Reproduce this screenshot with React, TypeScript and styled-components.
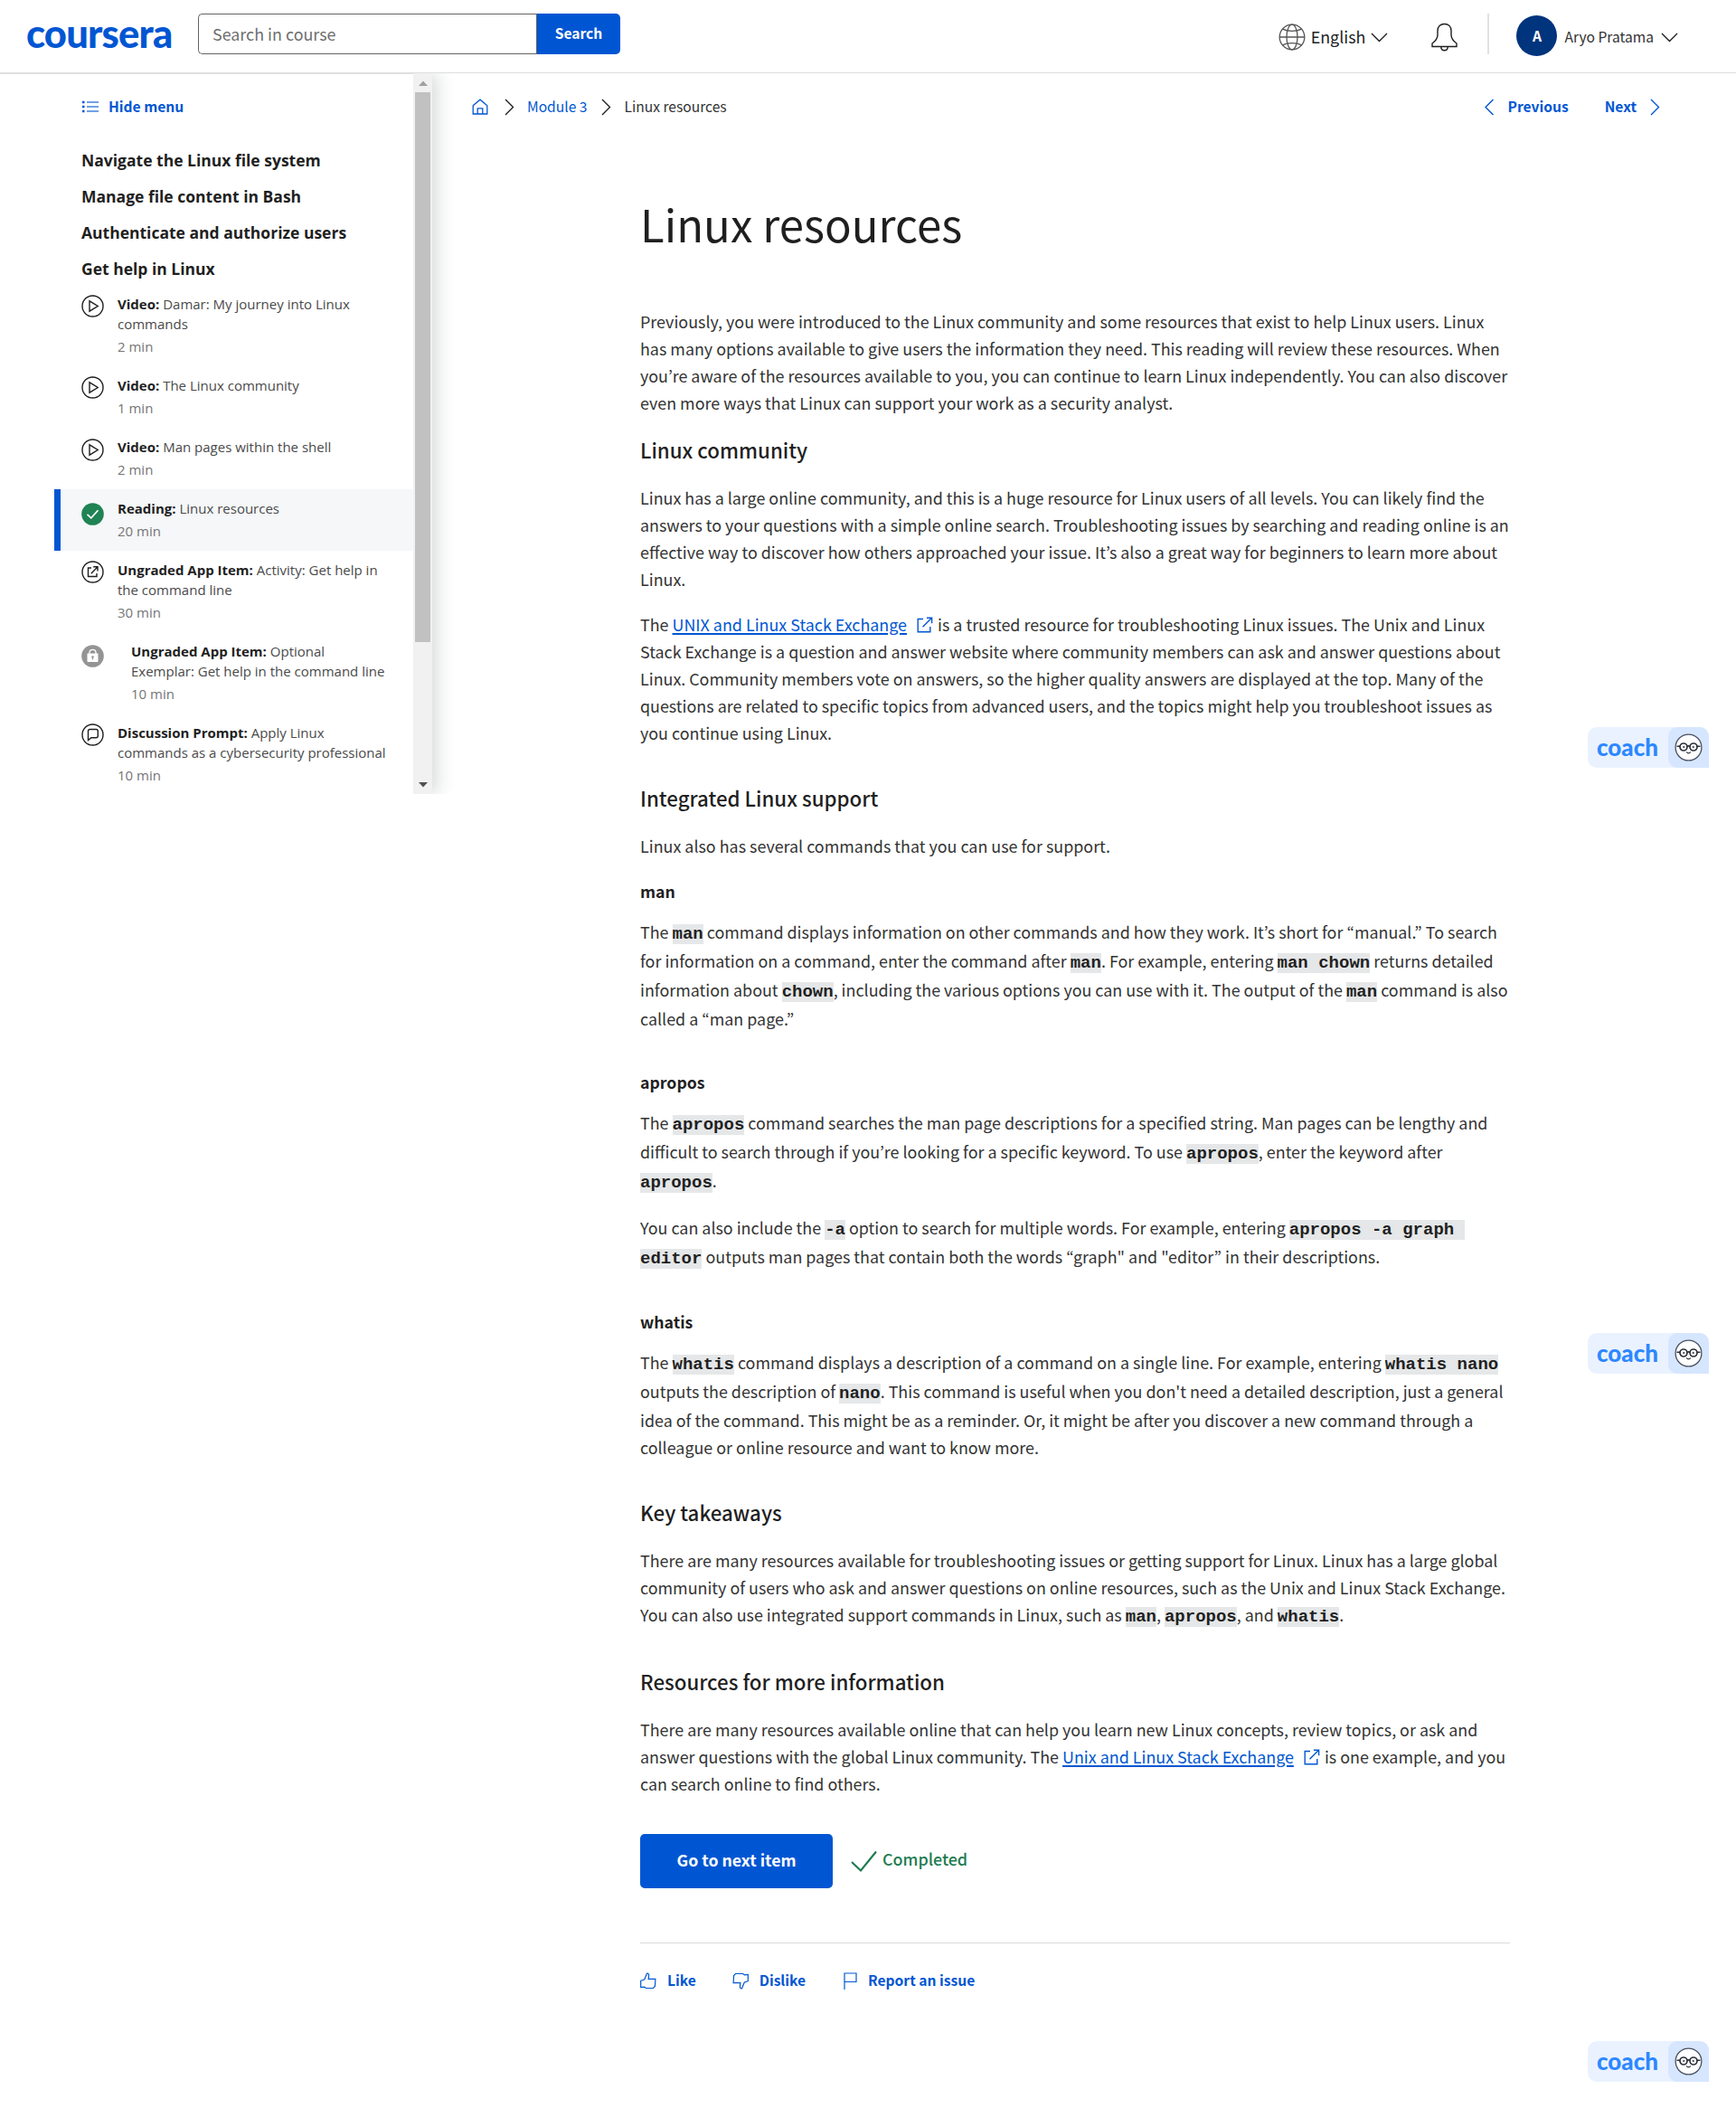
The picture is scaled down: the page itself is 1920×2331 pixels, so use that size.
import React from "react";
import styled, { createGlobalStyle } from "styled-components";

const sans = `"Noto Sans CJK JP", "Noto Sans", sans-serif`;
const blue = "#0056d2";
const ink = "#1f1f1f";

const GlobalStyle = createGlobalStyle`
  *, *::before, *::after { box-sizing: border-box; }
  html, body { margin: 0; padding: 0; background: #fff; }
  body { font-family: ${sans}; color: ${ink}; }
  h1, h2, h3, h4, p, ul { margin: 0; padding: 0; }
`;

const Page = styled.div`
  position: relative;
  width: 1920px;
  height: 2331px;
  overflow: hidden;
  background: #fff;
`;

/* ---------- header ---------- */

const Header = styled.header`
  display: flex;
  height: 81px;
  padding: 15px 64px 0 29px;
  border-bottom: 1px solid #dedede;
  align-items: flex-start;
`;

const Logo = styled.div`
  width: 190px;
  height: 45px;
  font: 900 43.5px/42px Lato, sans-serif;
  letter-spacing: -0.8px;
  color: ${blue};
  white-space: nowrap;
`;

const SearchForm = styled.div`
  display: flex;
  width: 467px;
  height: 45px;
`;

const SearchField = styled.div`
  flex: 1;
  padding-left: 15px;
  border: 1px solid #636363;
  border-right: 0;
  border-radius: 5px 0 0 5px;
  font-size: 17.9px;
  line-height: 42px;
  color: #6e6e6e;
`;

const SearchButton = styled.button`
  width: 93px;
  padding: 0 0 4px;
  border: 0;
  border-left: 1px solid #636363;
  border-radius: 0 5px 5px 0;
  background: ${blue};
  color: #fff;
  font: 700 15.6px/40px ${sans};
`;

const HeaderTools = styled.div`
  display: flex;
  flex: 1;
  align-items: center;
  justify-content: flex-end;
  height: 51px;
`;

const Language = styled.div`
  display: flex;
  align-items: center;
  gap: 6px;
  font-size: 17.9px;
  line-height: 30px;
  svg:last-child { margin-top: 2px; }
`;

const LanguageName = styled.span`
  margin-top: -2px;
`;

const BellBox = styled.div`
  display: flex;
  margin-left: 48px;
`;

const Divider = styled.div`
  width: 2px;
  height: 45px;
  margin: 0 30px 6px 33px;
  background: #e1e1e1;
`;

const Account = styled.div`
  display: flex;
  align-items: center;
  gap: 8px;
  margin-bottom: 2px;
  font-size: 15.6px;
  line-height: 30px;
  color: #333;
  svg { margin-top: 3px; }
`;

const Avatar = styled.div`
  width: 45px;
  height: 45px;
  border-radius: 50%;
  background: #00347d;
  color: #fff;
  font-size: 15.6px;
  font-weight: 700;
  line-height: 45px;
  text-align: center;
`;

/* ---------- body shell ---------- */

const Body = styled.div`
  display: flex;
  align-items: flex-start;
`;

const Sidebar = styled.aside`
  display: flex;
  flex: none;
  width: 478px;
  height: 797px;
  box-shadow: 6px 0 18px rgba(20, 40, 40, 0.16);
  clip-path: inset(0 -40px 0 0);
  background: #fff;
`;

const SidebarContent = styled.div`
  flex: 1;
  border-top: 1px solid #e1e1e1;
  overflow: hidden;
`;

const HideMenu = styled.div`
  display: flex;
  align-items: center;
  gap: 11px;
  height: 24px;
  margin: 24px 0 27px 91px;
  color: ${blue};
  font-size: 15.6px;
  font-weight: 700;
  line-height: 24px;
  span { margin-top: -2px; }
`;

const Section = styled.h3`
  height: 40px;
  padding-left: 90px;
  font: 700 17.5px/40px "Open Sans", sans-serif;
`;

const LessonList = styled.ul`
  margin-top: -2px;
`;

const Item = styled.li<{ $active?: boolean; $tall?: boolean }>`
  display: flex;
  height: ${(p) => (p.$tall ? 90 : 68)}px;
  margin-left: 60px;
  padding: 10px 0 0 ${(p) => (p.$active ? 23 : 30)}px;
  border-left: ${(p) => (p.$active ? `7px solid ${blue}` : "0")};
  background: ${(p) => (p.$active ? "#f5f7f8" : "transparent")};
  list-style: none;
`;

const ItemIcon = styled.div<{ $drop: number; $gap: number }>`
  flex: none;
  height: 25px;
  margin: ${(p) => p.$drop}px ${(p) => p.$gap}px 0 0;
  svg { display: block; }
`;

const ItemText = styled.div`
  font: 400 15px/22px "Open Sans", sans-serif;
  color: #4a4a4a;
  white-space: nowrap;
  b { font-weight: 700; color: ${ink}; }
`;

const Duration = styled.div`
  margin-top: 3px;
  color: #757575;
`;

const Scrollbar = styled.div`
  display: flex;
  flex-direction: column;
  align-items: center;
  width: 21px;
  background: #f1f1f1;
`;

const ArrowCell = styled.div`
  display: flex;
  align-items: center;
  justify-content: center;
  height: 21px;
`;

const Thumb = styled.div`
  width: 17px;
  height: 608px;
  margin-bottom: auto;
  background: #c1c1c1;
`;

/* ---------- main column ---------- */

const Main = styled.main`
  flex: 1;
`;

const TopNav = styled.nav`
  display: flex;
  align-items: center;
  justify-content: space-between;
  height: 30px;
  margin-top: 22px;
  padding: 0 84px 0 44px;
  font-size: 15.6px;
  line-height: 30px;
`;

const Crumbs = styled.div`
  display: flex;
  align-items: center;
  color: #333;
`;

const Crumb = styled.span<{ $link?: boolean }>`
  margin-top: -2px;
  color: ${(p) => (p.$link ? blue : "#333")};
`;

const CrumbSep = styled.span<{ $l: number; $r: number }>`
  display: flex;
  margin: 0 ${(p) => p.$r}px 0 ${(p) => p.$l}px;
`;

const Pager = styled.div`
  display: flex;
  align-items: center;
  gap: 15px;
  color: ${blue};
  font-weight: 700;
`;

const PagerLabel = styled.span<{ $space?: boolean }>`
  margin-top: -2px;
  margin-right: ${(p) => (p.$space ? 25 : 0)}px;
`;

const Article = styled.article`
  width: 962px;
  margin: 74px 0 0 230px;
  font-size: 17.9px;
  line-height: 30px;
`;

const Title = styled.h1`
  height: 80px;
  margin-bottom: 53px;
  font-size: 49.1px;
  font-weight: 400;
  line-height: 80px;
`;

const Heading = styled.h2<{ $first?: boolean }>`
  height: 32px;
  margin: ${(p) => (p.$first ? 21 : 41)}px 0 22px;
  font-size: 22.3px;
  font-weight: 500;
  line-height: 32px;
`;

const SubHeading = styled.h3<{ $first?: boolean }>`
  height: 30px;
  margin: ${(p) => (p.$first ? 20 : 40)}px 0 15px;
  font-size: 17.7px;
  font-weight: 700;
  line-height: 30px;
`;

const Para = styled.p`
  color: #333;
  & + & { margin-top: 20px; }
`;

const Line = styled.span<{ $code?: boolean }>`
  display: block;
  height: ${(p) => (p.$code ? 32 : 30)}px;
  white-space: pre;
`;

const Code = styled.code`
  background: #e5e7e8;
  color: ${ink};
  font: 700 19px/1 "Liberation Mono", monospace;
`;

const Link = styled.a`
  color: ${blue};
  text-decoration: underline;
  text-decoration-thickness: 2px;
  text-underline-offset: 2px;
`;

const Actions = styled.div`
  display: flex;
  align-items: center;
  height: 60px;
  margin-top: 41px;
`;

const NextButton = styled.button`
  width: 213px;
  height: 60px;
  margin-right: 20px;
  padding: 0 0 3px;
  border: 0;
  border-radius: 5px;
  background: ${blue};
  color: #fff;
  font: 700 17.7px/57px ${sans};
`;

const Completed = styled.div`
  display: flex;
  align-items: center;
  gap: 6px;
  color: #1d7c50;
  font-weight: 500;
  span { margin-top: -6px; }
`;

const Feedback = styled.div`
  display: flex;
  align-items: center;
  gap: 40px;
  margin-top: 60px;
  padding-top: 25px;
  border-top: 1px solid #dadada;
`;

const FeedbackButton = styled.div<{ $shift?: number }>`
  display: flex;
  align-items: center;
  gap: 12px;
  margin-left: ${(p) => p.$shift ?? 0}px;
  color: ${blue};
  font-size: 15.6px;
  font-weight: 700;
  svg { margin-top: 2px; }
`;

/* ---------- coach badge ---------- */

const CoachBadge = styled.div<{ $top: number }>`
  position: absolute;
  top: ${(p) => p.$top}px;
  left: 1756px;
  display: flex;
  width: 134px;
  height: 45px;
  border-radius: 10px 10px 0 10px;
  background: #eaf2ff;
`;

const CoachName = styled.div`
  width: 89px;
  padding-left: 10px;
  font: 900 26px/44px Lato, sans-serif;
  color: #2d87ff;
`;

const CoachFace = styled.div`
  display: flex;
  align-items: center;
  justify-content: center;
  width: 45px;
  height: 45px;
  border-radius: 10px 10px 0 10px;
  background: #d6e6ff;
`;

/* ---------- icons ---------- */

type Dir = "left" | "right" | "down";

const Chevron = ({ dir, color }: { dir: Dir; color: string }) => {
  const down = dir === "down";
  const d = down ? "M1 1l8.5 8.5L18 1" : dir === "right" ? "M1 1l8.5 8.5L1 18" : "M9.500 1L1 9.500 9.500 18";
  return (
    <svg width={down ? 19 : 11} height={down ? 11 : 19} fill="none" stroke={color} strokeWidth="1.4">
      <path d={d} />
    </svg>
  );
};

const Globe = () => (
  <svg width="30" height="30" viewBox="0 0 30 30" fill="none" stroke="#555" strokeWidth="1.3">
    <circle cx="15" cy="15" r="13.800" />
    <ellipse cx="15" cy="15" rx="6" ry="13.800" />
    <path d="M1.200 15h27.600M4.500 6.200C10 9 20 9 25.500 6.200M4.500 23.800C10 21 20 21 25.500 23.800" />
  </svg>
);

const Bell = () => (
  <svg width="29" height="32" viewBox="0 0 29 32" fill="none" stroke={ink} strokeWidth="1.4">
    <path d="M1 26.500V23c3.500-2.500 6-5.500 6-9.500V9c0-4.500 3-7.500 7.500-7.500S22 4.500 22 9v4.500c0 4 2.500 7 6 9.500v3.500zM10.800 26.800c0 2.500 1.500 4 3.700 4s3.700-1.500 3.700-4" />
  </svg>
);

const ListIcon = () => (
  <svg width="18" height="14" viewBox="0 0 18 14" fill="none" stroke={blue}>
    <path d="M5 2h13M5 7h13M5 12h13" strokeWidth="1.500" strokeOpacity=".75" />
    <path d="M0 2h2.500M0 7h2.500M0 12h2.500" strokeWidth="2.300" />
  </svg>
);

const HomeIcon = () => (
  <svg width="18" height="18" viewBox="0 0 18 18" fill="none" stroke={blue} strokeWidth="1.300">
    <path d="M1.200 7.800L9 1.200l7.800 6.600v9.200H1.200zM6.200 17v-6.200h5.600V17" />
  </svg>
);

const PlayIcon = () => (
  <svg width="25" height="25" viewBox="0 0 25 25" fill="none" stroke={ink} strokeWidth="1.400">
    <circle cx="12.500" cy="12.500" r="11.500" />
    <path d="M9 6.800v11.400l9.200-5.700z" />
  </svg>
);

const DoneIcon = () => (
  <svg width="25" height="25" viewBox="0 0 25 25" fill="none">
    <circle cx="12.500" cy="12.500" r="12.300" fill="#1f8354" />
    <path d="M6.500 12.800l4.300 4 7.700-8.500" stroke="#fff" strokeWidth="1.700" />
  </svg>
);

const AppIcon = () => (
  <svg width="25" height="25" viewBox="0 0 25 25" fill="none" stroke={ink} strokeWidth="1.400">
    <circle cx="12.500" cy="12.500" r="11.500" />
    <path d="M11 8H7.500v9.500H17V14M10.800 14.200l7.200-7.500M13.200 6.700H18v4.800" />
  </svg>
);

const LockIcon = () => (
  <svg width="25" height="25" viewBox="0 0 25 25" fill="none">
    <circle cx="12.500" cy="12.500" r="12.300" fill="#949494" />
    <path d="M9 10V8.500C9 6.500 10.500 5.300 12.500 5.300S16 6.500 16 8.500V10" stroke="#fff" strokeWidth="1.300" />
    <rect x="6.500" y="9.500" width="12" height="9.500" rx=".8" fill="#fff" />
    <circle cx="12.500" cy="13.500" r="1.300" fill="#949494" />
    <path d="M12.500 13.500v3" stroke="#949494" />
  </svg>
);

const ChatIcon = () => (
  <svg width="25" height="25" viewBox="0 0 25 25" fill="none" stroke={ink} strokeWidth="1.400">
    <circle cx="12.500" cy="12.500" r="11.500" />
    <path d="M7.500 18.500V8.500c0-1.500.5-2 2-2h6.800c1.300 0 2 .7 2 2v5.200c0 1.300-.7 2-2 2H11z" />
  </svg>
);

const ExternalSvg = styled.svg`
  margin: 0 1px 0 11px;
  vertical-align: -2px;
`;

const ExternalIcon = () => (
  <ExternalSvg width="18" height="18" viewBox="0 0 18 18" fill="none" stroke={blue} strokeWidth="1.400">
    <path d="M7 2.500H1.200v14.300h13.600V11M6.500 11.200L16.500 1.200M11 1.200h5.600v6" />
  </ExternalSvg>
);

const CheckIcon = () => (
  <svg width="29" height="25" viewBox="0 0 29 25" fill="none" stroke="#1d7c50" strokeWidth="2.200">
    <path d="M1 13l10 9.500L28 1.500" />
  </svg>
);

const ThumbIcon = ({ down }: { down?: boolean }) => (
  <svg width="18" height="19" viewBox="0.500 0 18 19" fill="none" stroke={blue} strokeWidth="1.200">
    <path
      transform={down ? "rotate(180 9.500 9.500)" : undefined}
      d="M1.200 9.200l4-1.200L8 1.200c1.500-.4 2.200.8 2.100 2L9.700 7.300h7.700l-.5 8.200-1.900 2H7L5 16.200l-3.800.3z"
    />
  </svg>
);

const FlagIcon = () => (
  <svg width="15" height="19" viewBox="0 0 15 19" fill="none" stroke={blue} strokeWidth="1.200">
    <path d="M1 19V1h13v9.500H1" />
  </svg>
);

const FaceIcon = () => (
  <svg width="31" height="31" viewBox="0 0 31 31" fill="none" stroke="#2b2f38" strokeWidth="1.300">
    <circle cx="15.500" cy="15.500" r="14.400" fill="#fff" stroke="#4a5162" />
    <circle cx="10" cy="15" r="4" strokeWidth="1.700" />
    <circle cx="21" cy="15" r="4" strokeWidth="1.700" />
    <path d="M2.500 14.300H6M25 14.300h3.500M14 14.500c.8-.8 2.200-.8 3 0" strokeWidth="1.600" />
    <path d="M13 20.500c1.500 1.800 3.500 1.800 5 0" strokeWidth="1.100" />
    <circle cx="10.300" cy="15" r=".8" fill="#2b2f38" strokeWidth=".6" />
    <circle cx="20.700" cy="15" r=".8" fill="#2b2f38" strokeWidth=".6" />
  </svg>
);

const Triangle = ({ up }: { up?: boolean }) => (
  <svg width="10" height="6" viewBox="0 0 10 6">
    <path d={up ? "M0 6L5 .5 10 6z" : "M0 0l5 5.500L10 0z"} fill={up ? "#a0a0a0" : "#505050"} />
  </svg>
);

/* ---------- data ---------- */

const sections = [
  "Navigate the Linux file system",
  "Manage file content in Bash",
  "Authenticate and authorize users",
  "Get help in Linux",
];

interface Lesson {
  kind: string;
  title: string[];
  time: string;
  icon: React.ReactNode;
  active?: boolean;
  drop?: number;
  gap?: number;
}

const lessons: Lesson[] = [
  { kind: "Video:", title: ["Damar: My journey into Linux", "commands"], time: "2 min", icon: <PlayIcon /> },
  { kind: "Video:", title: ["The Linux community"], time: "1 min", icon: <PlayIcon /> },
  { kind: "Video:", title: ["Man pages within the shell"], time: "2 min", icon: <PlayIcon />, drop: 2 },
  { kind: "Reading:", title: ["Linux resources"], time: "20 min", icon: <DoneIcon />, active: true, drop: 5 },
  { kind: "Ungraded App Item:", title: ["Activity: Get help in", "the command line"], time: "30 min", icon: <AppIcon /> },
  {
    kind: "Ungraded App Item:",
    title: ["Optional", "Exemplar: Get help in the command line"],
    time: "10 min",
    icon: <LockIcon />,
    drop: 4,
    gap: 30,
  },
  {
    kind: "Discussion Prompt:",
    title: ["Apply Linux", "commands as a cybersecurity professional"],
    time: "10 min",
    icon: <ChatIcon />,
  },
];

const Text = ({ lines }: { lines: string[] }) => (
  <Para>
    {lines.map((l) => (
      <Line key={l}>{l}</Line>
    ))}
  </Para>
);

const Coach = ({ top }: { top: number }) => (
  <CoachBadge $top={top}>
    <CoachName>coach</CoachName>
    <CoachFace>
      <FaceIcon />
    </CoachFace>
  </CoachBadge>
);

export default function App() {
  return (
    <Page>
      <GlobalStyle />
      <Header>
        <Logo>coursera</Logo>
        <SearchForm>
          <SearchField>Search in course</SearchField>
          <SearchButton>Search</SearchButton>
        </SearchForm>
        <HeaderTools>
          <Language>
            <Globe />
            <LanguageName>English</LanguageName>
            <Chevron dir="down" color={ink} />
          </Language>
          <BellBox>
            <Bell />
          </BellBox>
          <Divider />
          <Account>
            <Avatar>A</Avatar>
            Aryo Pratama
            <Chevron dir="down" color={ink} />
          </Account>
        </HeaderTools>
      </Header>

      <Body>
        <Sidebar>
          <SidebarContent>
            <HideMenu>
              <ListIcon />
              <span>Hide menu</span>
            </HideMenu>
            {sections.map((s) => (
              <Section key={s}>{s}</Section>
            ))}
            <LessonList>
              {lessons.map((l) => (
                <Item key={l.kind + l.title[0]} $active={l.active} $tall={l.title.length > 1}>
                  <ItemIcon $drop={l.drop ?? 1} $gap={l.gap ?? 15}>
                    {l.icon}
                  </ItemIcon>
                  <ItemText>
                    <b>{l.kind}</b> {l.title[0]}
                    {l.title[1] && (
                      <>
                        <br />
                        {l.title[1]}
                      </>
                    )}
                    <Duration>{l.time}</Duration>
                  </ItemText>
                </Item>
              ))}
            </LessonList>
          </SidebarContent>
          <Scrollbar>
            <ArrowCell>
              <Triangle up />
            </ArrowCell>
            <Thumb />
            <ArrowCell>
              <Triangle />
            </ArrowCell>
          </Scrollbar>
        </Sidebar>

        <Main>
          <TopNav>
            <Crumbs>
              <HomeIcon />
              <CrumbSep $l={18} $r={14}>
                <Chevron dir="right" color={ink} />
              </CrumbSep>
              <Crumb $link>Module 3</Crumb>
              <CrumbSep $l={16} $r={14}>
                <Chevron dir="right" color={ink} />
              </CrumbSep>
              <Crumb>Linux resources</Crumb>
            </Crumbs>
            <Pager>
              <Chevron dir="left" color={blue} />
              <PagerLabel $space>Previous</PagerLabel>
              <PagerLabel>Next</PagerLabel>
              <Chevron dir="right" color={blue} />
            </Pager>
          </TopNav>

          <Article>
            <Title>Linux resources</Title>
            <Text
              lines={[
                "Previously, you were introduced to the Linux community and some resources that exist to help Linux users. Linux",
                "has many options available to give users the information they need. This reading will review these resources. When",
                "you’re aware of the resources available to you, you can continue to learn Linux independently. You can also discover",
                "even more ways that Linux can support your work as a security analyst.",
              ]}
            />
            <Heading $first>Linux community</Heading>
            <Text
              lines={[
                "Linux has a large online community, and this is a huge resource for Linux users of all levels. You can likely find the",
                "answers to your questions with a simple online search. Troubleshooting issues by searching and reading online is an",
                "effective way to discover how others approached your issue. It’s also a great way for beginners to learn more about",
                "Linux.",
              ]}
            />
            <Para>
              <Line>
                The <Link>UNIX and Linux Stack Exchange</Link>
                <ExternalIcon /> is a trusted resource for troubleshooting Linux issues. The Unix and Linux
              </Line>
              <Line>Stack Exchange is a question and answer website where community members can ask and answer questions about</Line>
              <Line>Linux. Community members vote on answers, so the higher quality answers are displayed at the top. Many of the</Line>
              <Line>questions are related to specific topics from advanced users, and the topics might help you troubleshoot issues as</Line>
              <Line>you continue using Linux.</Line>
            </Para>

            <Heading>Integrated Linux support</Heading>
            <Text lines={["Linux also has several commands that you can use for support."]} />

            <SubHeading $first>man</SubHeading>
            <Para>
              <Line $code>
                The <Code>man</Code> command displays information on other commands and how they work. It’s short for “manual.” To search
              </Line>
              <Line $code>
                for information on a command, enter the command after <Code>man</Code>. For example, entering <Code>man chown</Code> returns detailed
              </Line>
              <Line $code>
                information about <Code>chown</Code>, including the various options you can use with it. The output of the <Code>man</Code> command is also
              </Line>
              <Line>called a “man page.”</Line>
            </Para>

            <SubHeading>apropos</SubHeading>
            <Para>
              <Line $code>
                The <Code>apropos</Code> command searches the man page descriptions for a specified string. Man pages can be lengthy and
              </Line>
              <Line $code>
                difficult to search through if you’re looking for a specific keyword. To use <Code>apropos</Code>, enter the keyword after
              </Line>
              <Line $code>
                <Code>apropos</Code>.
              </Line>
            </Para>
            <Para>
              <Line $code>
                You can also include the <Code>-a</Code> option to search for multiple words. For example, entering <Code>{"apropos -a graph "}</Code>
              </Line>
              <Line $code>
                <Code>editor</Code> outputs man pages that contain both the words “graph" and "editor” in their descriptions.
              </Line>
            </Para>

            <SubHeading>whatis</SubHeading>
            <Para>
              <Line $code>
                The <Code>whatis</Code> command displays a description of a command on a single line. For example, entering <Code>whatis nano</Code>
              </Line>
              <Line $code>
                outputs the description of <Code>nano</Code>. This command is useful when you don't need a detailed description, just a general
              </Line>
              <Line>idea of the command. This might be as a reminder. Or, it might be after you discover a new command through a</Line>
              <Line>colleague or online resource and want to know more.</Line>
            </Para>

            <Heading>Key takeaways</Heading>
            <Para>
              <Line>There are many resources available for troubleshooting issues or getting support for Linux. Linux has a large global</Line>
              <Line>community of users who ask and answer questions on online resources, such as the Unix and Linux Stack Exchange.</Line>
              <Line $code>
                You can also use integrated support commands in Linux, such as <Code>man</Code>, <Code>apropos</Code>, and <Code>whatis</Code>.
              </Line>
            </Para>

            <Heading>Resources for more information</Heading>
            <Para>
              <Line>There are many resources available online that can help you learn new Linux concepts, review topics, or ask and</Line>
              <Line>
                answer questions with the global Linux community. The <Link>Unix and Linux Stack Exchange</Link>
                <ExternalIcon /> is one example, and you
              </Line>
              <Line>can search online to find others.</Line>
            </Para>

            <Actions>
              <NextButton>Go to next item</NextButton>
              <Completed>
                <CheckIcon />
                <span>Completed</span>
              </Completed>
            </Actions>

            <Feedback>
              <FeedbackButton>
                <ThumbIcon />
                Like
              </FeedbackButton>
              <FeedbackButton>
                <ThumbIcon down />
                Dislike
              </FeedbackButton>
              <FeedbackButton $shift={2}>
                <FlagIcon />
                Report an issue
              </FeedbackButton>
            </Feedback>
          </Article>
        </Main>
      </Body>

      <Coach top={804} />
      <Coach top={1474} />
      <Coach top={2257} />
    </Page>
  );
}
